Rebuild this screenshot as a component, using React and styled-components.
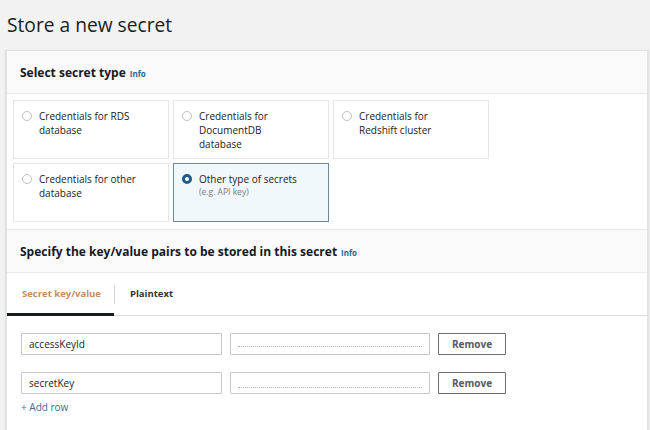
import React from "react";
import styled, { createGlobalStyle } from "styled-components";

const Global = createGlobalStyle`
  html, body {
    margin: 0;
    background: #f2f2f2;
    font-family: "Open Sans", "Noto Sans", Arial, sans-serif;
    color: #16191f;
  }
`;

const Page = styled.div`
  width: 650px;
  height: 430px;
  overflow: hidden;
  background: #f2f2f2;
`;

const Title = styled.h1`
  margin: 0;
  padding: 12px 0 0 7px;
  height: 50px;
  box-sizing: border-box;
  font-size: 19.2px;
  font-weight: 400;
  line-height: 26px;
  color: #1b1d22;
`;

const Card = styled.div`
  margin-left: 6px;
  width: 640px;
  background: #fff;
  border: 1px solid #e3e3e3;
  border-bottom: none;
  box-shadow: -1px 0 1px rgba(0, 0, 0, 0.08), 1px 0 1px rgba(0, 0, 0, 0.06);
  height: 390px;
`;

const Header = styled.div`
  display: flex;
  align-items: center;
  gap: 4px;
  height: ${(p) => p.h}px;
  padding-left: 13px;
  background: #fafafa;
  border-top: ${(p) => (p.top ? "1px solid #eaeaea" : "none")};
  border-bottom: 1px solid #eaeaea;
  box-sizing: border-box;
`;

const HeaderText = styled.span`
  font-size: 12px;
  font-weight: 700;
`;

const Info = styled.span`
  font-size: 8px;
  font-weight: 700;
  color: #2a6496;
  margin-top: 2px;
`;

const TileGrid = styled.div`
  display: grid;
  grid-template-columns: repeat(3, 156px);
  grid-auto-rows: 59px;
  gap: 4px;
  padding: 6px 6px 7px;
`;

const Tile = styled.div`
  display: flex;
  gap: 7px;
  padding: 8px 8px;
  box-sizing: border-box;
  border: 1px solid ${(p) => (p.selected ? "#6f8799" : "#e6e6e6")};
  background: ${(p) => (p.selected ? "#f1f8fc" : "#fff")};
`;

const Radio = styled.span`
  flex: none;
  width: 10px;
  height: 10px;
  margin-top: 2px;
  border-radius: 50%;
  box-sizing: border-box;
  border: ${(p) => (p.checked ? "3px solid #1d5a86" : "1px solid #c2c2c2")};
  background: #fff;
`;

const TileLabel = styled.div`
  font-size: 10px;
  line-height: 14px;
  color: #222;
`;

const Hint = styled.div`
  font-size: 8.5px;
  line-height: 11px;
  color: #7a7a7a;
`;

const Tabs = styled.div`
  display: flex;
  align-items: center;
  height: 42px;
  border-bottom: 1px solid #dcdcdc;
`;

const Tab = styled.div`
  height: 100%;
  display: flex;
  align-items: center;
  padding: 0 ${(p) => p.right}px 0 ${(p) => p.left}px;
  font-size: 9.5px;
  font-weight: 700;
  color: ${(p) => (p.active ? "#c98c5a" : "#333")};
  border-bottom: 3px solid ${(p) => (p.active ? "#16191f" : "transparent")};
  margin-bottom: -2px;
  box-sizing: border-box;
`;

const TabDivider = styled.span`
  width: 1px;
  height: 19px;
  background: #d5d5d5;
`;

const Rows = styled.div`
  display: flex;
  flex-direction: column;
  gap: 17px;
  padding: 17px 0 0 14px;
`;

const Row = styled.div`
  display: flex;
  gap: 8px;
`;

const Input = styled.div`
  width: ${(p) => p.w}px;
  height: 22px;
  box-sizing: border-box;
  border: 1px solid #c8c8c8;
  border-radius: 1px;
  padding: 0 7px;
  display: flex;
  align-items: center;
  font-size: 10px;
  color: #222;
`;

const Masked = styled.div`
  width: 100%;
  height: 4px;
  margin-top: ${(p) => p.off}px;
  border-bottom: 1px dotted #9a9a9a;
  opacity: 0.75;
`;

const Button = styled.div`
  width: 68px;
  height: 22px;
  box-sizing: border-box;
  border: 1px solid #6b6b6b;
  border-radius: 1px;
  display: flex;
  align-items: center;
  justify-content: center;
  font-size: 10px;
  font-weight: 700;
  color: #545b64;
`;

const AddRow = styled.div`
  font-size: 10px;
  color: #3b6e96;
  margin-top: -11px;
`;

const tiles = [
  { label: ["Credentials for RDS", "database"] },
  { label: ["Credentials for", "DocumentDB", "database"] },
  { label: ["Credentials for", "Redshift cluster"] },
  { label: ["Credentials for other", "database"] },
  { label: ["Other type of secrets"], hint: "(e.g. API key)", selected: true },
];

const rows = [
  { key: "accessKeyId", off: 0 },
  { key: "secretKey", off: 4 },
];

export default function App() {
  return (
    <Page>
      <Global />
      <Title>Store a new secret</Title>
      <Card>
        <Header h={43}>
          <HeaderText>Select secret type</HeaderText>
          <Info>Info</Info>
        </Header>
        <TileGrid>
          {tiles.map((t, i) => (
            <Tile key={i} selected={t.selected}>
              <Radio checked={t.selected} />
              <div>
                {t.label.map((l) => (
                  <TileLabel key={l}>{l}</TileLabel>
                ))}
                {t.hint && <Hint>{t.hint}</Hint>}
              </div>
            </Tile>
          ))}
        </TileGrid>
        <Header h={44} top>
          <HeaderText>Specify the key/value pairs to be stored in this secret</HeaderText>
          <Info>Info</Info>
        </Header>
        <Tabs>
          <Tab active left={15} right={13}>Secret key/value</Tab>
          <TabDivider />
          <Tab left={15} right={15}>Plaintext</Tab>
        </Tabs>
        <Rows>
          {rows.map((r) => (
            <Row key={r.key}>
              <Input w={201}>{r.key}</Input>
              <Input w={200}>
                <Masked off={r.off} />
              </Input>
              <Button>Remove</Button>
            </Row>
          ))}
          <AddRow>+ Add row</AddRow>
        </Rows>
      </Card>
    </Page>
  );
}
